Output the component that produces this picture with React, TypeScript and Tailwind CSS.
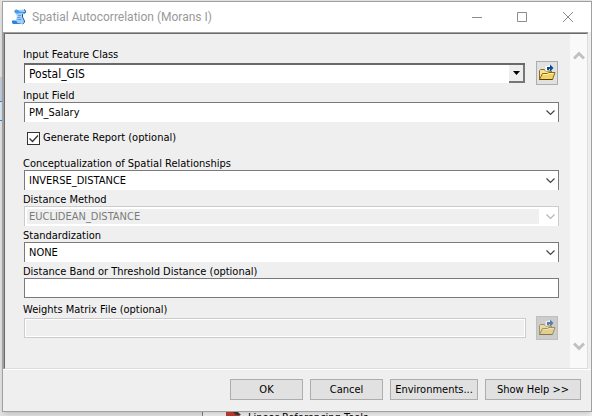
import { useId, useState } from "react";
import type { ReactNode } from "react";

const bodyFont = "font-['DejaVu_Sans_Condensed',Roboto,sans-serif]";

function ScrollIcon() {
  return (
    <svg width="16" height="18" viewBox="0 0 16 18" aria-hidden="true">
      <path d="M4 4.500C2.500 2 4.500 1 7 2l6-.5c2.500 0 2.500 3 1 4h-1.500l-1 3.500 2 4c0 2-1 3-3 3H3c-2.500 0-2.500-3-1-4h3l1-4L4.500 5.500z" fill="#a3d0f8" />
      <path d="M4 5C2.500 2 4.500 1 7 2l1.500 1.500 4.500.5 1 1.500-3-.5-5 .5z" fill="#4c9be8" />
      <path d="M1.500 12.500l4 .5 1 2 4 .5-1 .5H3c-2 0-2.500-2.500-1.500-3.500z" fill="#2f83d6" />
      <path d="M7 7.500h3M6.500 9.500h3M6.500 11.500h4" stroke="#5f9bd8" strokeWidth="1" />
      <path d="M13 1.500c1.500.5 2 2.500 1 3.500h-1.500M11.500 6v3l2 4c0 1.500-.5 2.500-2 3" stroke="#1d5ba3" strokeWidth="1" fill="none" />
    </svg>
  );
}

function FolderIcon() {
  return (
    <svg width="18" height="18" viewBox="0 0 18 18" aria-hidden="true">
      <path d="M1.500 15.500v-9l1-1h4l1 1.500h6v2" fill="#f6e39a" stroke="#8a6d20" />
      <path d="M1.500 15.500l3-6h5l1-1h6.500l-2.500 7z" fill="#f2d264" stroke="#8a6914" />
      <path d="M5 10.500h5l1-1h4.500" stroke="#fff4b0" fill="none" />
      <path d="M1.500 15.500h13" stroke="#594000" />
      <path d="M8.500 7V3h3V1" stroke="#ffffff" strokeWidth="2" fill="none" />
      <path d="M9 6V3h3V.5L15.500 4 12 7.500V5h-1v1z" fill="#064c96" />
    </svg>
  );
}

function BrowseButton({ disabled = false }: { disabled?: boolean }) {
  return (
    <button
      type="button"
      aria-label="Browse"
      disabled={disabled}
      className={`mr-px flex h-6 w-[22px] shrink-0 items-center justify-center border ${
        disabled ? "border-[#bfbfbf] bg-[#cccccc]" : "border-[#adadad] bg-[#e1e1e1]"
      }`}
    >
      <span className={disabled ? "opacity-60" : ""}>
        <FolderIcon />
      </span>
    </button>
  );
}

function Field({ label, children }: { label: string; children: (id: string) => ReactNode }) {
  const id = useId();
  return (
    <div>
      <label htmlFor={id} className="-ml-px block h-4 leading-5 whitespace-nowrap">
        {label}
      </label>
      {children(id)}
    </div>
  );
}

function Combo({ id, value, disabled = false }: { id: string; value: string; disabled?: boolean }) {
  return (
    <div className={`relative h-5 border border-b-0 bg-white ${disabled ? "border-[#cccccc]" : "border-[#7a7a7a]"}`}>
      <select
        id={id}
        disabled={disabled}
        defaultValue={value}
        className={`block h-full w-full appearance-none leading-4 opacity-100 outline-none ${
          disabled ? "border-2 border-r-[19px] border-white bg-[#efefef] pl-[2px] text-[#7b7b7b]" : "bg-white pl-1"
        }`}
      >
        <option>{value}</option>
      </select>
      <svg className="pointer-events-none absolute top-[7px] right-[3px]" width="9" height="6" viewBox="0 0 9 6" aria-hidden="true">
        <path d="M.5 .5l4 4 4-4" fill="none" stroke={disabled ? "#b4b4b4" : "#444444"} strokeWidth="1.200" />
      </svg>
    </div>
  );
}

function DialogButton({ children, wide = "w-[73px]" }: { children: string; wide?: string }) {
  return (
    <button type="button" className={`h-[21px] border border-[#adadad] bg-[#e1e1e1] leading-4 whitespace-nowrap ${wide}`}>
      {children}
    </button>
  );
}

function TitleBar() {
  return (
    <header className="flex h-[30px] items-center bg-white pl-2">
      <ScrollIcon />
      <h1 className="ml-[5px] flex-1 font-[Roboto,sans-serif] text-[12px] leading-5 text-[#999999]">
        Spatial Autocorrelation (Morans I)
      </h1>
      <div className="flex text-[#8c8c8c]">
        <button type="button" aria-label="Minimize" className="flex h-7 w-[45px] items-center justify-center">
          <svg width="10" height="11" viewBox="0 0 10 11"><path d="M0 5.500h10" stroke="currentColor" /></svg>
        </button>
        <button type="button" aria-label="Maximize" className="flex h-7 w-[45px] items-center justify-center">
          <svg width="10" height="10" viewBox="0 0 10 10"><path d="M.5 .5h9v9h-9z" fill="none" stroke="currentColor" /></svg>
        </button>
        <button type="button" aria-label="Close" className="flex h-7 w-[47px] items-center justify-center">
          <svg width="10" height="10" viewBox="0 0 10 10"><path d="M0 0l10 10M10 0L0 10" stroke="currentColor" /></svg>
        </button>
      </div>
    </header>
  );
}

export default function App() {
  const [report, setReport] = useState(true);
  return (
    <div className={`h-screen overflow-hidden bg-[#e3e3e3] text-[11px] text-black ${bodyFont}`}>
      <div className="flex pt-px">
        <div className="w-[2px] shrink-0 overflow-hidden" aria-hidden="true">
          <div className="h-[76px]" />
          <div className="h-6 bg-[#bfcddd]" />
          <div className="h-5 border-y border-[#2a87d0] bg-[#d8e7f3]" />
        </div>
        <main className="min-w-0 flex-1 border border-[#a0a0a0] bg-[#efefef] shadow-md">
          <TitleBar />
          <div className="mr-[3px] border-t border-l border-[#a0a0a0]">
            <div className="flex border border-t-[#6b6b6b] border-r-[#dddddd] border-b-[#dddddd] border-l-[#696969]">
              <form className="min-w-0 flex-1 pt-[11px] pr-[11px] pb-7 pl-[19px]">
                <Field label="Input Feature Class">
                  {(id) => (
                    <div className="flex items-center gap-[11px]">
                      <div className="flex h-5 min-w-0 flex-1 border-t-2 border-l border-[#696969] bg-white">
                        <select id={id} className="min-w-0 flex-1 appearance-none bg-white pl-1 text-[12px] leading-4 outline-none">
                          <option>Postal_GIS</option>
                        </select>
                        <span className="flex w-4 items-center justify-center border-r-2 border-b-2 border-[#777777] bg-[#eeeeee]" aria-hidden="true">
                          <svg width="7" height="4" viewBox="0 0 7 4"><path d="M0 0h7L3.500 4z" /></svg>
                        </span>
                      </div>
                      <BrowseButton />
                    </div>
                  )}
                </Field>
                <div className="pt-px">
                  <Field label="Input Field">{(id) => <Combo id={id} value="PM_Salary" />}</Field>
                </div>
                <label className="flex h-8 items-center gap-[3px] pl-[3px]">
                  <span className="relative flex">
                    <input
                      type="checkbox"
                      checked={report}
                      onChange={(e) => setReport(e.target.checked)}
                      className="peer size-[13px] appearance-none border border-[#333333] bg-white"
                    />
                    <svg className="pointer-events-none absolute inset-0 hidden peer-checked:block" width="13" height="13" viewBox="0 0 13 13" aria-hidden="true">
                      <path d="M2.500 6.500l3 3 5.500-6" fill="none" stroke="#333333" strokeWidth="1.300" />
                    </svg>
                  </span>
                  Generate Report (optional)
                </label>
                <Field label="Conceptualization of Spatial Relationships">{(id) => <Combo id={id} value="INVERSE_DISTANCE" />}</Field>
                <Field label="Distance Method">{(id) => <Combo id={id} value="EUCLIDEAN_DISTANCE" disabled />}</Field>
                <Field label="Standardization">{(id) => <Combo id={id} value="NONE" />}</Field>
                <Field label="Distance Band or Threshold Distance (optional)">
                  {(id) => <input id={id} type="text" className="block h-5 w-full border border-[#7a7a7a] bg-white px-1 outline-none" />}
                </Field>
                <div className="pt-[2px]">
                  <Field label="Weights Matrix File (optional)">
                    {(id) => (
                      <div className="flex items-center gap-[10px]">
                        <input id={id} type="text" disabled className="h-5 min-w-0 flex-1 border border-[#cccccc] bg-[#efefef] px-1 ring-1 ring-white ring-inset" />
                        <BrowseButton disabled />
                      </div>
                    )}
                  </Field>
                </div>
              </form>
              <div className="flex w-[17px] shrink-0 flex-col items-center justify-between bg-[#f9f9f9] pt-[17px] pb-[17px] text-[#c0c0c0]">
                <svg width="12" height="9" viewBox="0 0 12 9" aria-hidden="true"><path d="M1 7.500l5-5 5 5" fill="none" stroke="currentColor" strokeWidth="3" /></svg>
                <svg width="12" height="9" viewBox="0 0 12 9" aria-hidden="true"><path d="M1 1.500l5 5 5-5" fill="none" stroke="currentColor" strokeWidth="3" /></svg>
              </div>
            </div>
          </div>
          <footer className="flex justify-end gap-[7px] border-t border-white pt-[9px] pr-[10px] pb-[11px]">
            <DialogButton>OK</DialogButton>
            <DialogButton>Cancel</DialogButton>
            <DialogButton wide="w-[88px]">Environments...</DialogButton>
            <DialogButton wide="w-24">Show Help &gt;&gt;</DialogButton>
          </footer>
        </main>
      </div>
      <div className="ml-[202px] flex border-l border-[#808080] bg-[#efefef] pl-[23px]">
        <svg width="18" height="14" viewBox="0 0 18 14" aria-hidden="true">
          <path d="M0 0h9l7 5v8H0z" fill="#b5362b" />
          <path d="M7 0h5l3 3h-5z" fill="#333333" />
        </svg>
        <span className="ml-1 leading-3">Linear Referencing Tools</span>
      </div>
    </div>
  );
}
